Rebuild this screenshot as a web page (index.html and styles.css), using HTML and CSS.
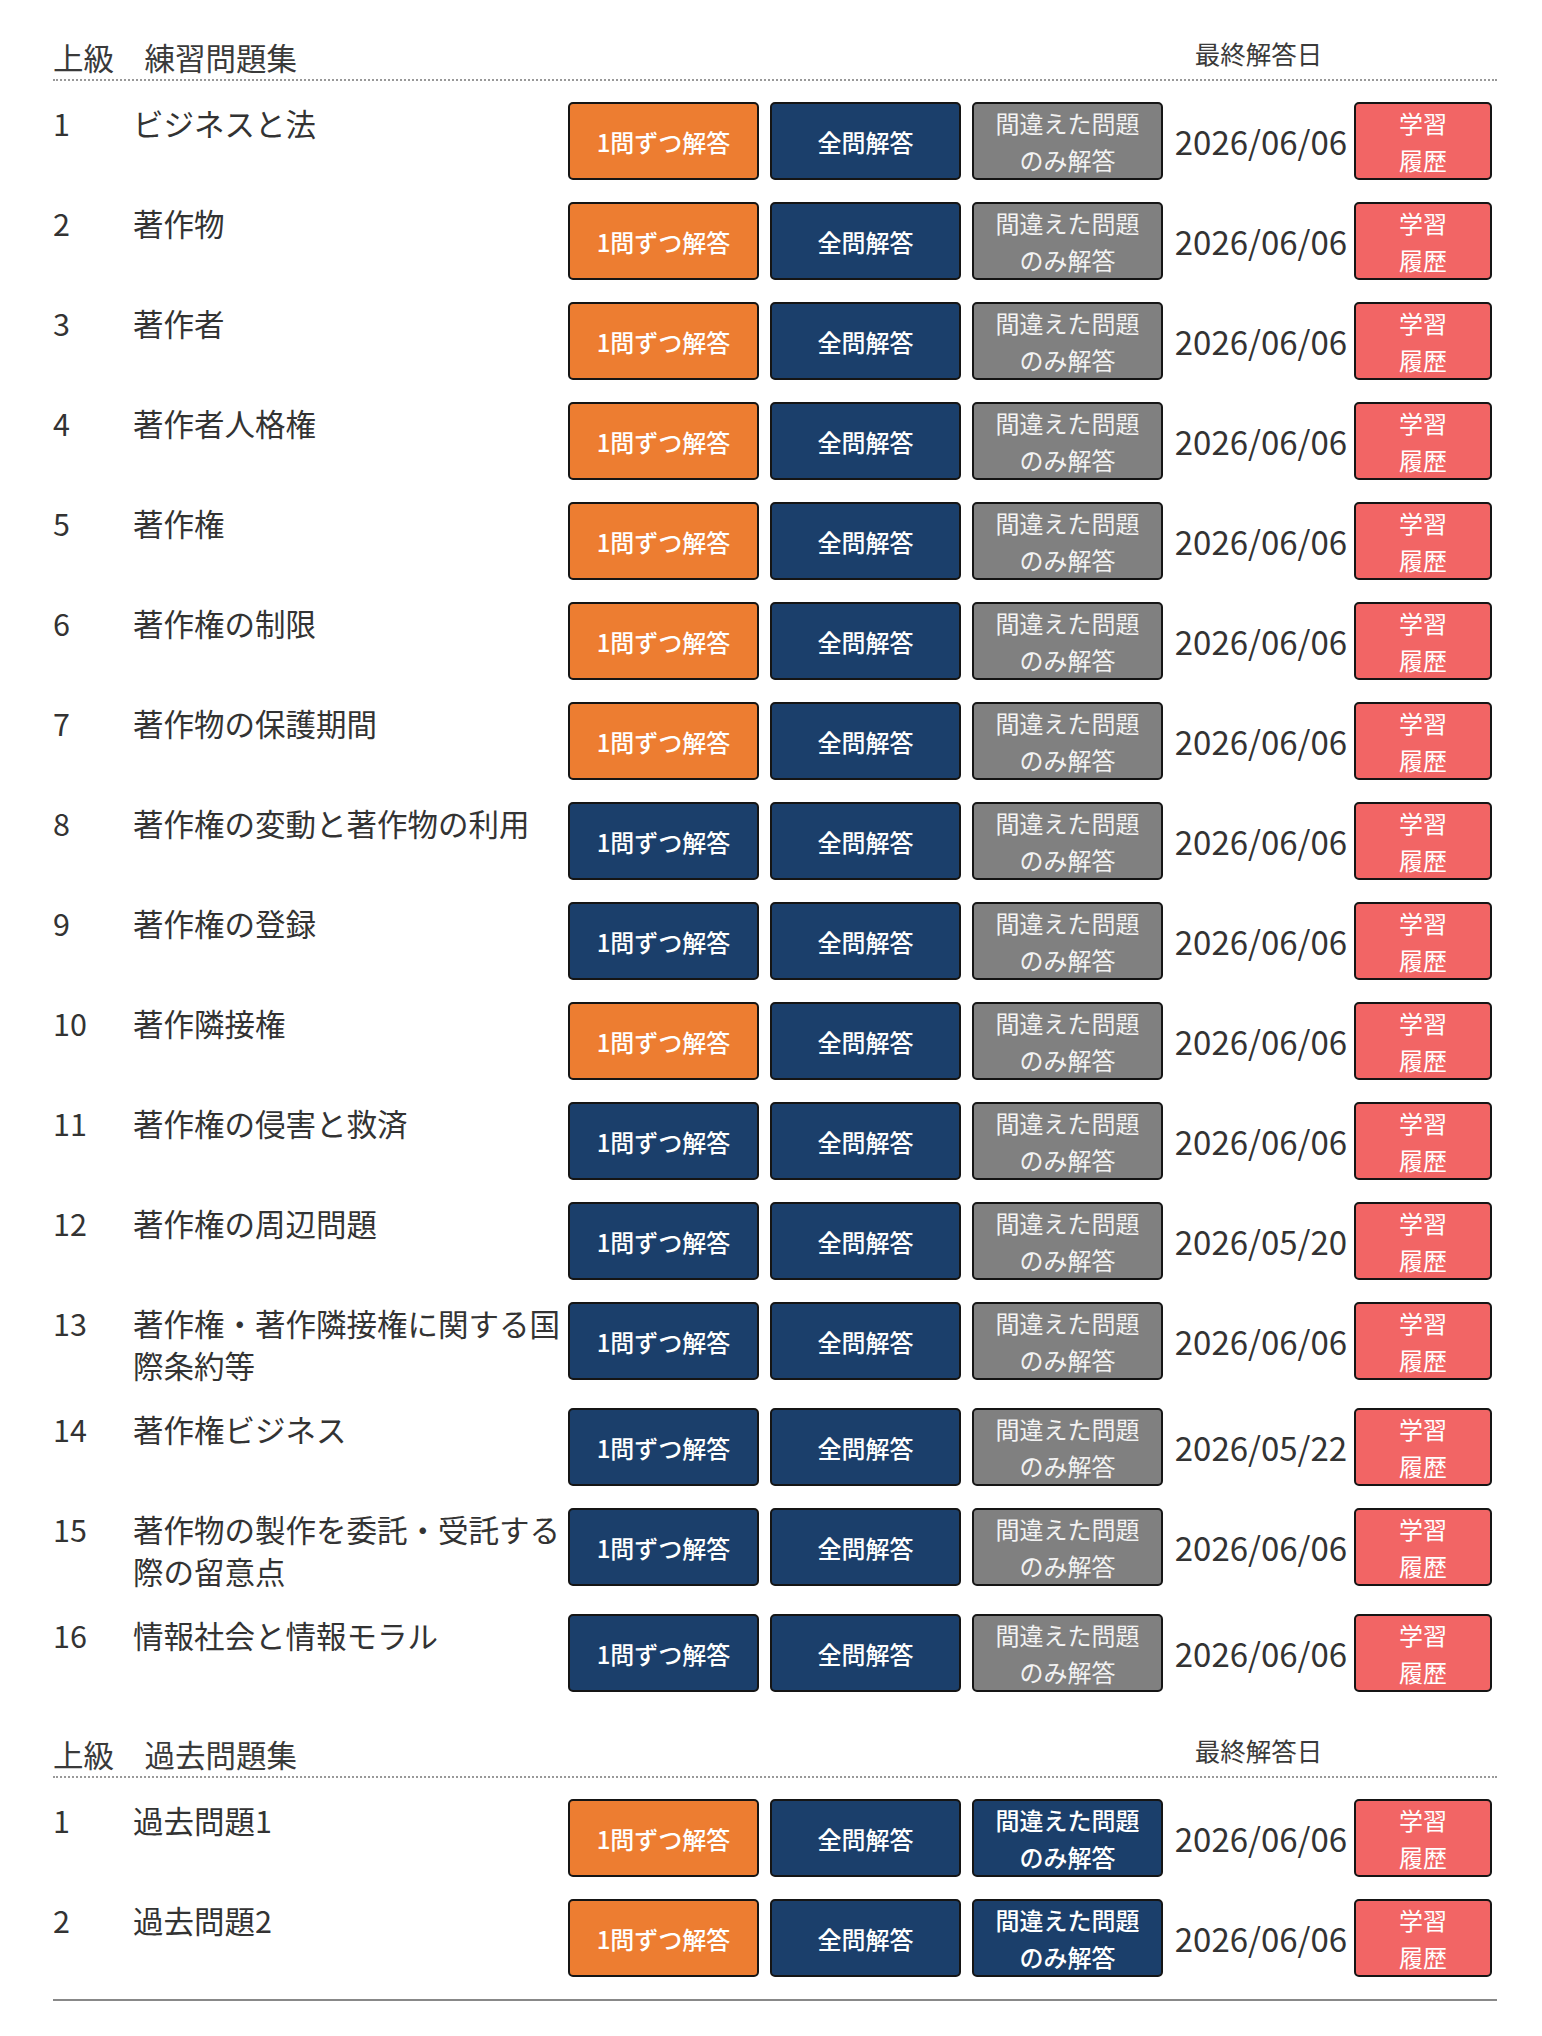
FILE: index.html
```html
<!DOCTYPE html>
<html lang="ja">
<head>
<meta charset="utf-8">
<title>上級 問題集</title>
<link rel="stylesheet" href="styles.css">
</head>
<body>
<div class="page">
  <section class="section">
    <div class="head">
      <div class="head-title">上級　練習問題集</div>
      <div class="head-label">最終解答日</div>
    </div>
    <div class="row"><div class="num">1</div><div class="title">ビジネスと法</div><a class="btn orange">1問ずつ解答</a><a class="btn navy">全問解答</a><a class="btn gray">間違えた問題<br>のみ解答</a><div class="date">2026/06/06</div><a class="btn red">学習<br>履歴</a></div>
    <div class="row"><div class="num">2</div><div class="title">著作物</div><a class="btn orange">1問ずつ解答</a><a class="btn navy">全問解答</a><a class="btn gray">間違えた問題<br>のみ解答</a><div class="date">2026/06/06</div><a class="btn red">学習<br>履歴</a></div>
    <div class="row"><div class="num">3</div><div class="title">著作者</div><a class="btn orange">1問ずつ解答</a><a class="btn navy">全問解答</a><a class="btn gray">間違えた問題<br>のみ解答</a><div class="date">2026/06/06</div><a class="btn red">学習<br>履歴</a></div>
    <div class="row"><div class="num">4</div><div class="title">著作者人格権</div><a class="btn orange">1問ずつ解答</a><a class="btn navy">全問解答</a><a class="btn gray">間違えた問題<br>のみ解答</a><div class="date">2026/06/06</div><a class="btn red">学習<br>履歴</a></div>
    <div class="row"><div class="num">5</div><div class="title">著作権</div><a class="btn orange">1問ずつ解答</a><a class="btn navy">全問解答</a><a class="btn gray">間違えた問題<br>のみ解答</a><div class="date">2026/06/06</div><a class="btn red">学習<br>履歴</a></div>
    <div class="row"><div class="num">6</div><div class="title">著作権の制限</div><a class="btn orange">1問ずつ解答</a><a class="btn navy">全問解答</a><a class="btn gray">間違えた問題<br>のみ解答</a><div class="date">2026/06/06</div><a class="btn red">学習<br>履歴</a></div>
    <div class="row"><div class="num">7</div><div class="title">著作物の保護期間</div><a class="btn orange">1問ずつ解答</a><a class="btn navy">全問解答</a><a class="btn gray">間違えた問題<br>のみ解答</a><div class="date">2026/06/06</div><a class="btn red">学習<br>履歴</a></div>
    <div class="row"><div class="num">8</div><div class="title">著作権の変動と著作物の利用</div><a class="btn navy">1問ずつ解答</a><a class="btn navy">全問解答</a><a class="btn gray">間違えた問題<br>のみ解答</a><div class="date">2026/06/06</div><a class="btn red">学習<br>履歴</a></div>
    <div class="row"><div class="num">9</div><div class="title">著作権の登録</div><a class="btn navy">1問ずつ解答</a><a class="btn navy">全問解答</a><a class="btn gray">間違えた問題<br>のみ解答</a><div class="date">2026/06/06</div><a class="btn red">学習<br>履歴</a></div>
    <div class="row"><div class="num">10</div><div class="title">著作隣接権</div><a class="btn orange">1問ずつ解答</a><a class="btn navy">全問解答</a><a class="btn gray">間違えた問題<br>のみ解答</a><div class="date">2026/06/06</div><a class="btn red">学習<br>履歴</a></div>
    <div class="row"><div class="num">11</div><div class="title">著作権の侵害と救済</div><a class="btn navy">1問ずつ解答</a><a class="btn navy">全問解答</a><a class="btn gray">間違えた問題<br>のみ解答</a><div class="date">2026/06/06</div><a class="btn red">学習<br>履歴</a></div>
    <div class="row"><div class="num">12</div><div class="title">著作権の周辺問題</div><a class="btn navy">1問ずつ解答</a><a class="btn navy">全問解答</a><a class="btn gray">間違えた問題<br>のみ解答</a><div class="date">2026/05/20</div><a class="btn red">学習<br>履歴</a></div>
    <div class="row"><div class="num">13</div><div class="title">著作権・著作隣接権に関する国際条約等</div><a class="btn navy">1問ずつ解答</a><a class="btn navy">全問解答</a><a class="btn gray">間違えた問題<br>のみ解答</a><div class="date">2026/06/06</div><a class="btn red">学習<br>履歴</a></div>
    <div class="row"><div class="num">14</div><div class="title">著作権ビジネス</div><a class="btn navy">1問ずつ解答</a><a class="btn navy">全問解答</a><a class="btn gray">間違えた問題<br>のみ解答</a><div class="date">2026/05/22</div><a class="btn red">学習<br>履歴</a></div>
    <div class="row"><div class="num">15</div><div class="title">著作物の製作を委託・受託する際の留意点</div><a class="btn navy">1問ずつ解答</a><a class="btn navy">全問解答</a><a class="btn gray">間違えた問題<br>のみ解答</a><div class="date">2026/06/06</div><a class="btn red">学習<br>履歴</a></div>
    <div class="row"><div class="num">16</div><div class="title">情報社会と情報モラル</div><a class="btn navy">1問ずつ解答</a><a class="btn navy">全問解答</a><a class="btn gray">間違えた問題<br>のみ解答</a><div class="date">2026/06/06</div><a class="btn red">学習<br>履歴</a></div>
  </section>
  <section class="section last">
    <div class="head">
      <div class="head-title">上級　過去問題集</div>
      <div class="head-label">最終解答日</div>
    </div>
    <div class="row"><div class="num">1</div><div class="title">過去問題1</div><a class="btn orange">1問ずつ解答</a><a class="btn navy">全問解答</a><a class="btn navy">間違えた問題<br>のみ解答</a><div class="date">2026/06/06</div><a class="btn red">学習<br>履歴</a></div>
    <div class="row"><div class="num">2</div><div class="title">過去問題2</div><a class="btn orange">1問ずつ解答</a><a class="btn navy">全問解答</a><a class="btn navy">間違えた問題<br>のみ解答</a><div class="date">2026/06/06</div><a class="btn red">学習<br>履歴</a></div>
  </section>
</div>
</body>
</html>
```
FILE: styles.css
```css
html, body {
  margin: 0;
  padding: 0;
  background: #ffffff;
}
body {
  font-family: "Noto Sans CJK JP", "Noto Sans", sans-serif;
  color: #333333;
}
.page {
  width: 1444px;
  margin-left: 53px;
  padding-top: 36px;
}
.section + .section {
  margin-top: 19px;
}
.section.last {
  border-bottom: 2px solid #888888;
}
.head {
  display: flex;
  align-items: flex-start;
  height: 43px;
  border-bottom: 2px dotted #999999;
  margin-bottom: 21px;
}
.head-title {
  width: 1110px;
  font-size: 30.5px;
  line-height: 43px;
  color: #3a3a3a;
}
.head-label {
  width: 191px;
  text-align: center;
  font-size: 25.5px;
  line-height: 34px;
  color: #3a3a3a;
}
.row {
  display: flex;
  align-items: flex-start;
  padding-bottom: 22px;
}
.num {
  width: 80px;
  flex: none;
  font-size: 30.5px;
  line-height: 41.5px;
  padding-top: 1px;
}
.title {
  width: 435px;
  flex: none;
  font-size: 30.5px;
  line-height: 41.5px;
  padding-top: 1px;
}
.btn {
  flex: none;
  box-sizing: border-box;
  width: 191px;
  height: 78px;
  border: 2px solid #151515;
  border-radius: 5px;
  display: flex;
  align-items: center;
  justify-content: center;
  text-align: center;
  color: #ffffff;
  font-size: 24px;
  line-height: 37px;
  font-weight: 500;
}
.btn + .btn {
  margin-left: 11px;
}
.orange {
  background: #ed7d31;
}
.navy {
  background: #1b3f6b;
}
.gray {
  background: #808080;
  color: #f2f2f2;
  font-weight: 400;
}
.red {
  width: 138px;
  background: #f26565;
  font-weight: 400;
}
.date {
  flex: none;
  width: 191px;
  height: 78px;
  box-sizing: border-box;
  padding-left: 5px;
  display: flex;
  align-items: center;
  justify-content: center;
  font-size: 33px;
  color: #333333;
  white-space: nowrap;
}
```
